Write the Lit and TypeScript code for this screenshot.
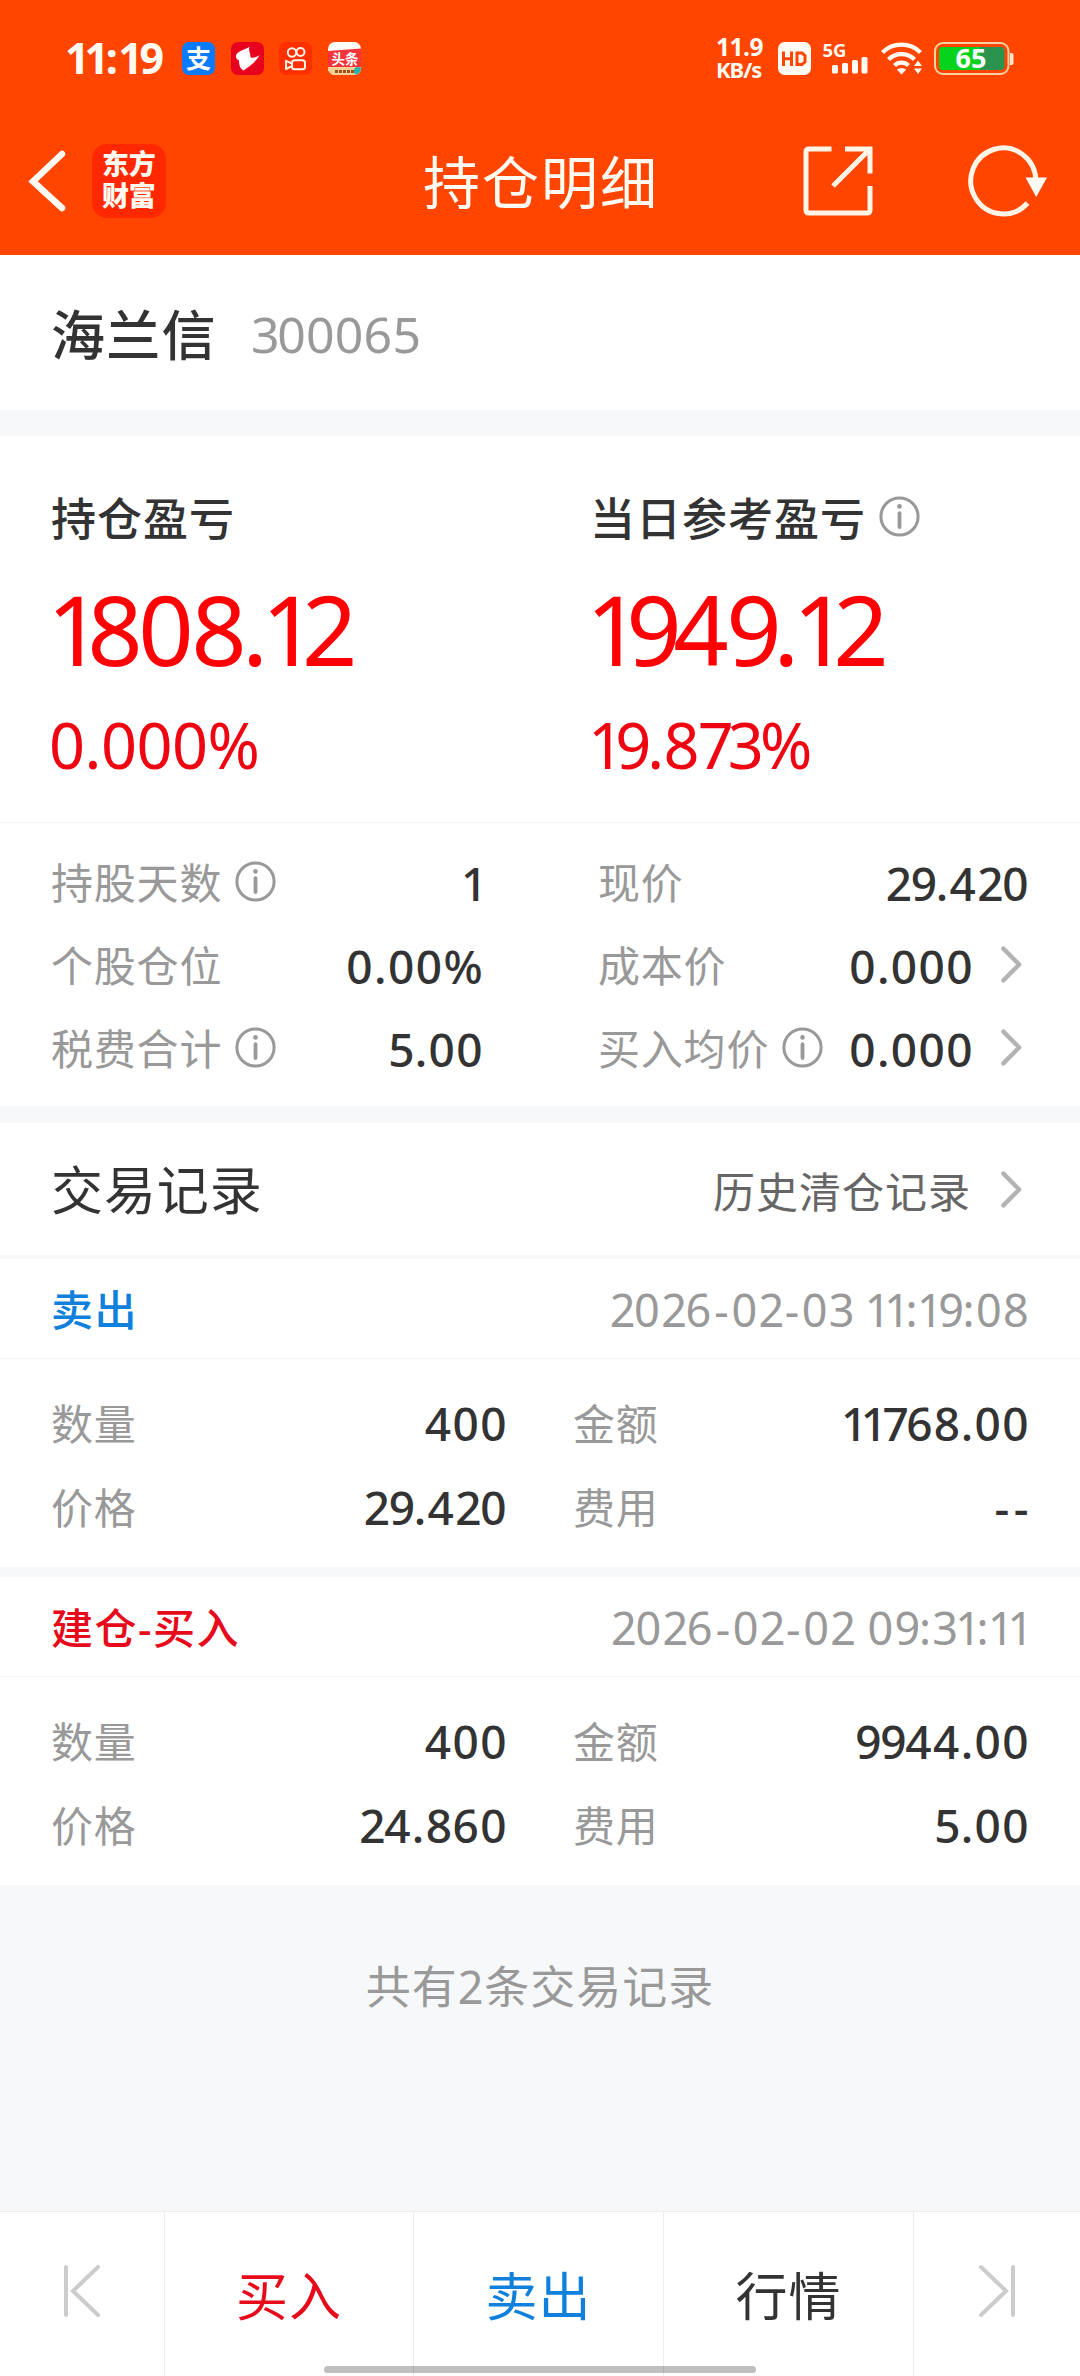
import { LitElement, html, css, svg, nothing } from "lit";
import { customElement, property } from "lit/decorators.js";

const base = css`
  * { box-sizing: border-box; }
  .num { white-space: pre; letter-spacing: var(--track, 0px); }
  svg { overflow: visible; }
`;

/* Advance corrections, in em, that give the figures proportional widths. */
const ADVANCE: Record<string, number> = {
  "1": -0.13, "2": -0.06, "3": -0.05, "5": -0.03, "7": -0.09, "8": -0.02, "9": -0.06, "-": 0.03,
};
const BEFORE: Record<string, number> = { "1": -0.04, "-": 0.04 };

const digits = (text: string) => {
  const runs: { text: string; shift: number }[] = [];
  [...text].forEach((c, i) => {
    const end = i === text.length - 1;
    const shift = end ? (c === "1" ? -0.1 : 0) : (ADVANCE[c] ?? 0) + (BEFORE[text[i + 1]] ?? 0);
    const last = runs[runs.length - 1];
    if (last && last.shift === shift) last.text += c;
    else runs.push({ text: c, shift });
  });
  return html`<span class="num">${runs.map((r) =>
    r.shift ? html`<span style="letter-spacing:calc(var(--track, 0px) + ${r.shift.toFixed(2)}em)">${r.text}</span>` : r.text)}</span>`;
};

const infoIcon = html`<svg class="info" width="41" height="41" viewBox="0 0 41 41" fill="none" stroke="#999">
  <circle cx="20.5" cy="20.5" r="18.6" stroke-width="3" />
  <path d="M20.5 17.2V31" stroke-width="3.8" stroke-linecap="round" />
  <circle cx="20.5" cy="10.4" r="2.3" fill="#999" stroke="none" />
</svg>`;

const moreIcon = html`<svg class="more" width="21" height="37" viewBox="0 0 21 37" fill="none" stroke="#b3b3b3" stroke-width="4.4" stroke-linecap="round" stroke-linejoin="round">
  <path d="M2.4 2.6L18.2 18.5L2.4 34.4" />
</svg>`;

@customElement("status-bar")
class StatusBar extends LitElement {
  static styles = [base, css`
    :host { display: flex; align-items: center; height: 116px; padding: 0 66px 0 65px; color: #fffaf2; }
    .time { width: 117px; font-size: 43px; font-weight: 700; line-height: 60px; --track: 2.2px; }
    .apps { display: flex; gap: 15.5px; flex: 1; }
    .net { width: 62px; font-size: 24.5px; font-weight: 700; line-height: 22.5px; white-space: nowrap; }
    .rate { letter-spacing: -0.5px; }
    .unit { font-size: 22px; letter-spacing: -1px; }
    svg { display: block; flex: none; }
    .hd { margin-right: 12px; }
    .cell { margin-right: 13px; }
    .wifi { margin-right: 12px; }
    .glyph { font-family: "Noto Sans", "Noto Sans CJK SC", sans-serif; font-weight: 700; }
  `];
  render() {
    return html`
      <div class="time">${digits("11:19")}</div>
      <div class="apps">
        <svg width="33" height="33" viewBox="0 0 33 33">
          <rect width="33" height="33" rx="7" fill="#0a7aff" />
          <text class="glyph" x="16.5" y="25.5" font-size="25" text-anchor="middle" fill="#fff">支</text>
        </svg>
        <svg width="33" height="33" viewBox="0 0 33 33">
          <rect width="33" height="33" rx="7" fill="#e8001f" />
          <path d="M18.500 4.500C14 8 10.500 7.500 6 11.500C4 14 5 17 8 18.500C8 22 8.500 26 12.500 28.500C17 25 24 21.500 28.500 13C25 15.500 22 16 19.500 15.500C20 12 17 9 18.500 4.500Z" fill="#fff" />
        </svg>
        <svg width="33" height="33" viewBox="0 0 33 33">
          <rect width="33" height="33" rx="7" fill="#ff2f00" />
          <g fill="none" stroke="#fff3e8" stroke-width="2" stroke-linejoin="round">
            <circle cx="13" cy="10.500" r="4.200" /><circle cx="21.500" cy="10" r="4" />
            <rect x="13" y="18.300" width="13" height="9" rx="2.500" />
            <path d="M13 21.500L7 18.800V27L13 24.200" />
          </g>
        </svg>
        <svg width="33" height="33" viewBox="0 0 33 33">
          <clipPath id="r"><rect width="33" height="33" rx="7" /></clipPath>
          <g clip-path="url(#r)">
            <rect width="33" height="33" fill="#fffdf8" />
            <path d="M0 9L33 6.500V25H0Z" fill="#f5343c" />
            <rect y="25" width="33" height="8" fill="#f8cf94" />
            <circle cx="30" cy="29" r="4" fill="#20b5b0" />
            <path d="M7 29.500H26" stroke="#a0501e" stroke-width="3" stroke-dasharray="3 1" />
          </g>
          <text class="glyph" x="17" y="21.500" font-size="13.500" text-anchor="middle" fill="#fff">头条</text>
        </svg>
      </div>
      <div class="net"><div class="rate">11.9</div><div class="unit">KB/s</div></div>
      <svg class="hd" width="33" height="33" viewBox="0 0 33 33">
        <rect width="33" height="33" rx="6.500" fill="#fffaf2" />
        <path d="M5.500 9.500V24M13.500 9.500V24M5.500 16.800H13.500M19 11V22.500H24L27 19.800V13.700L24 11Z" fill="none" stroke="#ff4500" stroke-width="3" />
      </svg>
      <svg class="cell" width="45" height="33" viewBox="0 0 45 33">
        <text class="glyph" x="-0.500" y="15" font-size="18.500" textLength="24" lengthAdjust="spacingAndGlyphs" fill="#fffaf2">5G</text>
        <g fill="#fffaf2">
          <rect x="9" y="23" width="6" height="8.500" rx="1.500" /><rect x="19" y="21" width="6" height="10.500" rx="1.500" />
          <rect x="29" y="18" width="6" height="13.500" rx="1.500" /><rect x="38.500" y="15" width="6" height="16.500" rx="1.500" />
        </g>
      </svg>
      <svg class="wifi" width="41" height="33" viewBox="0 0 41 33" fill="none" stroke="#fffaf2" stroke-width="4.300">
        <path d="M1.500 10.500A27 27 0 0 1 39.500 10.500M7.500 17.500A18.500 18.500 0 0 1 33.500 17.500M13.500 23.500A10 10 0 0 1 27.500 23.500" />
        <path d="M15.800 27.500Q20.500 24.500 25.200 27.500L20.500 32.500Z" fill="#fffaf2" stroke="none" />
        <path d="M37 18.500L41 24H33ZM37 32L41 26.500H33Z" fill="#fffaf2" stroke="none" />
      </svg>
      <svg width="80" height="33" viewBox="0 0 80 33">
        <rect x="1" y="1" width="73.500" height="31" rx="8" fill="none" stroke="#ffd0a0" stroke-width="2" />
        <rect x="5" y="5" width="65.500" height="23" rx="4" fill="#2a934e" />
        <path d="M9 5H46V28H9A4 4 0 0 1 5 24V9A4 4 0 0 1 9 5Z" fill="#06d31c" />
        <path d="M76 11H77.500Q79.500 11 79.500 13V21Q79.500 23 77.500 23H76Z" fill="#ffe6cc" />
        <text class="glyph" x="37" y="26" font-size="27" text-anchor="middle" fill="#fff">65</text>
      </svg>
    `;
  }
}

@customElement("nav-header")
class NavHeader extends LitElement {
  static styles = [base, css`
    :host { display: grid; grid-template-columns: 1fr auto 1fr; align-items: center; height: 129px; padding: 0 33px 0 28px; color: #fffaf2; }
    .left { display: flex; align-items: center; gap: 26px; }
    .logo { width: 74px; height: 74px; border-radius: 15px; background: #ff2800; font-size: 27px; font-weight: 900; line-height: 32px; padding: 4px 0 0 10px; letter-spacing: -0.3px; }
    .title { font-size: 57px; line-height: 80px; letter-spacing: 2px; padding: 2px 0 0 7px; }
    .right { display: flex; align-items: center; justify-content: flex-end; gap: 95px; }
  `];
  render() {
    return html`
      <div class="left">
        <svg width="38" height="62" viewBox="0 0 38 62" fill="none" stroke="#fffaf2" stroke-width="6.5" stroke-linecap="round"><path d="M34 4L5 31.500L34 58" /></svg>
        <div class="logo"><div>东方</div><div>财富</div></div>
      </div>
      <div class="title">持仓明细</div>
      <div class="right">
        <svg width="70" height="70" viewBox="0 0 70 70" fill="none" stroke="#fff6e8" stroke-width="5">
          <path d="M28.500 3H6Q3 3 3 6V64Q3 67 6 67H64Q67 67 67 64V40" />
          <path d="M42 3H67V27.500M67 3L30 40" />
        </svg>
        <svg width="79" height="72" viewBox="0 0 79 72">
          <path d="M67.800 36A32.500 33 0 1 0 59.500 58" fill="none" stroke="#fff6e8" stroke-width="5" />
          <path d="M57.500 32.500H79L68.200 52Z" fill="#fffaf2" />
        </svg>
      </div>
    `;
  }
}

@customElement("stat-cell")
class StatCell extends LitElement {
  @property() label = "";
  @property() value = "";
  @property({ type: Boolean }) info = false;
  @property({ type: Boolean }) more = false;
  static styles = [base, css`
    :host { display: flex; align-items: center; justify-content: space-between; height: 100%; }
    .label { display: flex; align-items: center; gap: 13px; margin-left: -1px; color: #999; font-size: 42px; letter-spacing: 0.8px; white-space: nowrap; }
    .text { margin-top: -4px; }
    .info { margin-top: -3px; flex: none; }
    .value { display: flex; align-items: center; color: #333; font-size: 46px; font-weight: 500; --track: 1.4px; margin-right: -2px; }
    .more { margin: -3px 8px 0 27px; }
  `];
  render() {
    return html`
      <div class="label"><span class="text">${this.label}</span>${this.info ? infoIcon : nothing}</div>
      <div class="value">${digits(this.value)}${this.more ? moreIcon : nothing}</div>
    `;
  }
}

@customElement("trade-record")
class TradeRecord extends LitElement {
  @property() kind = "";
  @property() tone = "";
  @property() time = "";
  @property({ attribute: false }) fields: string[][] = [];
  static styles = [base, css`
    :host { display: block; background: #fff; }
    .head { display: flex; align-items: center; justify-content: space-between; height: 100px; padding: 2px 50px 0 52px; border-bottom: 1px solid #f4f5f6; }
    .kind { margin: -4px 0 0 -1px; font-size: 42px; font-weight: 500; letter-spacing: 1.5px; }
    .sell { color: #0f80dc; }
    .buy { color: #e60a1a; }
    .time { color: #999; font-size: 45px; --track: 1.3px; }
    .body { display: grid; grid-template-columns: 454px 454px; column-gap: 68px; grid-auto-rows: 84px; padding: 22px 52px 18px; }
  `];
  render() {
    return html`
      <div class="head">
        <div class="kind ${this.tone}">${this.kind}</div>
        <div class="time">${digits(this.time)}</div>
      </div>
      <div class="body">${this.fields.map(([l, v]) => html`<stat-cell label=${l} value=${v}></stat-cell>`)}</div>
    `;
  }
}

@customElement("app-root")
class AppRoot extends LitElement {
  static styles = [base, css`
    :host { display: flex; flex-direction: column; width: 1080px; height: 2376px; background: #f7f8fa; color: #333; font-family: "Noto Sans", "Noto Sans CJK SC", sans-serif; overflow: hidden; }
    .top { height: 255px; background: #ff4500; }
    .stock { display: flex; align-items: center; gap: 34px; height: 155px; padding: 2px 52px 0 51px; background: #fff; margin-bottom: 26px; }
    .name { margin-top: -3px; font-size: 54px; font-weight: 500; letter-spacing: 1.3px; }
    .code { font-size: 50px; color: #999; --track: 0.2px; }
    .summary { display: grid; grid-template-columns: 539px 1fr; height: 387px; padding: 46px 0 0 52px; background: #fff; border-bottom: 1px solid #f4f5f6; }
    .caption { display: flex; align-items: center; gap: 13px; height: 72px; margin-left: -1px; font-size: 45px; font-weight: 500; letter-spacing: 1px; }
    .text { margin-top: -4px; }
    .info { margin-top: -3px; }
    .profit { height: 150px; margin-left: -5px; line-height: 148px; font-size: 97px; --track: -2.6px; color: #ff0005; }
    .rate { height: 80px; margin-left: -3px; line-height: 82px; font-size: 63px; --track: -0.5px; color: #ee0511; }
    .stats { display: grid; grid-template-columns: 430px 429px; column-gap: 117px; grid-auto-rows: 83px; padding: 18px 52px 16px; background: #fff; margin-bottom: 17px; }
    .section { display: flex; align-items: center; justify-content: space-between; height: 136px; padding: 0 58px 0 51px; background: #fff; border-bottom: 4px solid #f6f8f9; }
    .heading { margin-top: -3px; font-size: 52px; letter-spacing: 0.9px; }
    .history { display: flex; align-items: center; gap: 30px; color: #666; font-size: 42px; letter-spacing: 1px; }
    .records { display: flex; flex-direction: column; gap: 10px; }
    .total { flex: 1; padding-top: 68px; text-align: center; font-size: 45px; line-height: 68px; letter-spacing: 1px; color: #999; }
    .actions { position: relative; display: grid; grid-template-columns: 165px 249px 250px 250px 166px; height: 165px; border-top: 1px solid #ebeced; background: #fff; }
    .action { display: flex; align-items: center; justify-content: center; padding-bottom: 2px; font-size: 52px; letter-spacing: 1px; border-right: 1px solid #ebeced; }
    .action:last-of-type { border-right: 0; }
    .edge { padding: 0 0 7px; }
    .buy { color: #e60a1a; }
    .sell { color: #0f80dc; }
    .home { position: absolute; left: 324px; bottom: 3px; width: 432px; height: 7px; border-radius: 4px; background: rgba(0, 0, 0, 0.25); }
  `];
  render() {
    const edge = (flip: boolean) => html`<svg width="38" height="54" viewBox="0 0 38 54" fill="none" stroke="#ccc" stroke-width="4" stroke-linecap="round">
      ${flip ? svg`<path d="M35 3V51M3 3L28 27L3 51" />` : svg`<path d="M3 3V51M35 3L10 27L35 51" />`}
    </svg>`;
    return html`
      <div class="top"><status-bar></status-bar><nav-header></nav-header></div>
      <div class="stock"><div class="name">海兰信</div><div class="code">${digits("300065")}</div></div>
      <div class="summary">
        <div>
          <div class="caption"><span class="text">持仓盈亏</span></div>
          <div class="profit">${digits("1808.12")}</div>
          <div class="rate">${digits("0.000%")}</div>
        </div>
        <div>
          <div class="caption"><span class="text">当日参考盈亏</span>${infoIcon}</div>
          <div class="profit">${digits("1949.12")}</div>
          <div class="rate">${digits("19.873%")}</div>
        </div>
      </div>
      <div class="stats">
        <stat-cell label="持股天数" value="1" info></stat-cell>
        <stat-cell label="现价" value="29.420"></stat-cell>
        <stat-cell label="个股仓位" value="0.00%"></stat-cell>
        <stat-cell label="成本价" value="0.000" more></stat-cell>
        <stat-cell label="税费合计" value="5.00" info></stat-cell>
        <stat-cell label="买入均价" value="0.000" info more></stat-cell>
      </div>
      <div class="section"><div class="heading">交易记录</div><div class="history">历史清仓记录${moreIcon}</div></div>
      <div class="records">
        <trade-record kind="卖出" tone="sell" time="2026-02-03 11:19:08"
          .fields=${[["数量", "400"], ["金额", "11768.00"], ["价格", "29.420"], ["费用", "--"]]}></trade-record>
        <trade-record kind="建仓-买入" tone="buy" time="2026-02-02 09:31:11"
          .fields=${[["数量", "400"], ["金额", "9944.00"], ["价格", "24.860"], ["费用", "5.00"]]}></trade-record>
      </div>
      <div class="total">共有2条交易记录</div>
      <div class="actions">
        <div class="action edge">${edge(false)}</div>
        <div class="action buy">买入</div>
        <div class="action sell">卖出</div>
        <div class="action">行情</div>
        <div class="action edge">${edge(true)}</div>
        <span class="home"></span>
      </div>
    `;
  }
}
